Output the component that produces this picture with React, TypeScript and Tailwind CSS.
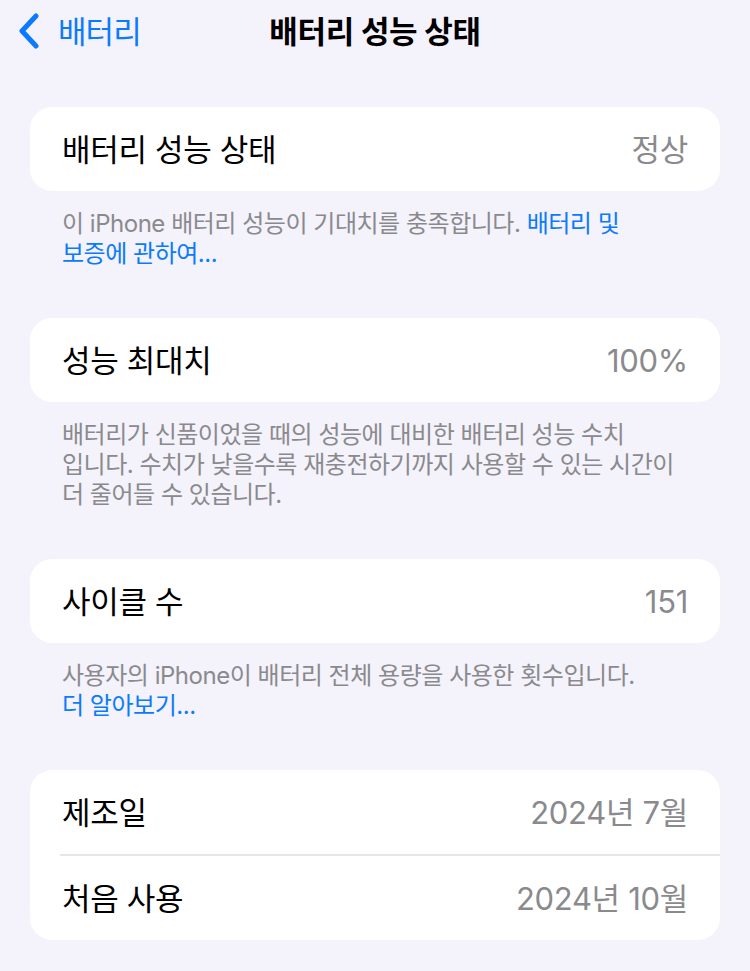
const font = { fontFamily: 'Inter, "Noto Sans CJK KR", "Noto Sans", sans-serif' };

function Row({ label, value }: { label: string; value: string }) {
  return (
    <div className="flex h-[84px] items-center justify-between pl-8 pr-8">
      <span className="text-[31px] leading-none tracking-[-0.01em] text-black">{label}</span>
      <span className="text-[31px] leading-none tracking-[-0.01em] text-[#8a8a8e]">{value}</span>
    </div>
  );
}

function Note({ children }: { children: React.ReactNode }) {
  return (
    <p className="pl-[62px] pr-6 pt-[18px] pb-[49px] text-[24px] leading-[30px] tracking-[-0.02em] text-[#8a8a8e]">
      {children}
    </p>
  );
}

export default function App() {
  return (
    <div className="min-h-[971px] w-[750px] bg-[#f4f2fa]" style={font}>
      {/* Nav bar */}
      <div className="relative flex h-[62px] items-center">
        <div className="flex items-center gap-[18px] pl-[18px] text-[#0a7aff]">
          <svg width="22" height="36" viewBox="0 0 22 36" fill="none">
            <path d="M18 3L4 18l14 15" stroke="currentColor" strokeWidth="5" strokeLinecap="round" strokeLinejoin="round" />
          </svg>
          <span className="text-[31px] leading-none tracking-[-0.03em]">배터리</span>
        </div>
        <span className="absolute left-1/2 -translate-x-1/2 text-[31px] font-bold leading-none tracking-[-0.01em] text-black">
          배터리 성능 상태
        </span>
      </div>

      <div className="px-[30px] pt-[45px]">
        <div className="rounded-[22px] bg-white">
          <Row label="배터리 성능 상태" value="정상" />
        </div>
      </div>
      <Note>
        이 iPhone 배터리 성능이 기대치를 충족합니다. <span className="text-[#0a7aff]">배터리 및<br />보증에 관하여...</span>
      </Note>

      <div className="px-[30px]">
        <div className="rounded-[22px] bg-white">
          <Row label="성능 최대치" value="100%" />
        </div>
      </div>
      <Note>
        배터리가 신품이었을 때의 성능에 대비한 배터리 성능 수치
        <br />
        입니다. 수치가 낮을수록 재충전하기까지 사용할 수 있는 시간이
        <br />
        더 줄어들 수 있습니다.
      </Note>

      <div className="px-[30px]">
        <div className="rounded-[22px] bg-white">
          <Row label="사이클 수" value="151" />
        </div>
      </div>
      <Note>
        사용자의 iPhone이 배터리 전체 용량을 사용한 횟수입니다.
        <br />
        <span className="text-[#0a7aff]">더 알아보기...</span>
      </Note>

      <div className="px-[30px]">
        <div className="rounded-[22px] bg-white">
          <Row label="제조일" value="2024년 7월" />
          <div className="ml-[30px] h-[2px] bg-[#e6e6ea]" />
          <Row label="처음 사용" value="2024년 10월" />
        </div>
      </div>
    </div>
  );
}
